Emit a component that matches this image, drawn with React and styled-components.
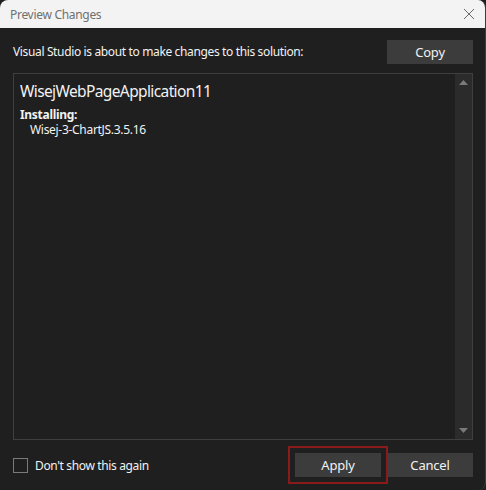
import styled, { createGlobalStyle } from "styled-components";

const Global = createGlobalStyle`
  html, body {
    margin: 0;
    padding: 0;
    background: #1f1f1f;
  }
  body {
    font-family: "Noto Sans", "Open Sans", sans-serif;
  }
`;

const Window = styled.div`
  width: 486px;
  height: 490px;
  box-sizing: border-box;
  display: flex;
  flex-direction: column;
  background: #1f1f1f;
  border-right: 1px solid #3d3d3d;
  border-radius: 8px;
  overflow: hidden;
`;

const TitleBar = styled.div`
  height: 28px;
  flex: none;
  display: flex;
  align-items: center;
  justify-content: space-between;
  background: #f3f3f3;
  padding: 0 10px;
`;

const Title = styled.span`
  font-size: 12px;
  letter-spacing: -0.3px;
  color: #707070;
`;

const Body = styled.div`
  flex: 1;
  display: flex;
  flex-direction: column;
  padding: 12px 12px 6px 13px;
  min-height: 0;
`;

const Header = styled.div`
  display: flex;
  align-items: center;
  justify-content: space-between;
  height: 23px;
`;

const Label = styled.span`
  font-size: 12px;
  letter-spacing: -0.36px;
  color: #f2f2f2;
  margin-top: -1px;
`;

const Button = styled.button`
  width: 86px;
  height: 24px;
  border: none;
  background: #3c3c3c;
  color: #f2f2f2;
  font-family: inherit;
  font-size: 13px;
  letter-spacing: -0.2px;
  padding: 0;
`;

const ListBox = styled.div`
  margin-top: 10px;
  height: 368px;
  box-sizing: border-box;
  border: 1px solid #3f3f3f;
  display: flex;
`;

const ListContent = styled.div`
  flex: 1;
  padding: 6px 6px;
`;

const Project = styled.div`
  font-size: 15.5px;
  letter-spacing: -0.62px;
  color: #f2f2f2;
  line-height: 22px;
`;

const Section = styled.div`
  margin-top: 6px;
  font-size: 12px;
  font-weight: bold;
  letter-spacing: -0.3px;
  color: #f2f2f2;
  line-height: 14px;
`;

const Package = styled.div`
  font-size: 12px;
  letter-spacing: -0.3px;
  color: #f2f2f2;
  padding-left: 10px;
  line-height: 16px;
`;

const ScrollBar = styled.div`
  width: 17px;
  background: #2b2b2b;
  display: flex;
  flex-direction: column;
  justify-content: space-between;
`;

const Arrow = styled.div`
  height: 17px;
  display: flex;
  align-items: center;
  justify-content: center;
`;

const Footer = styled.div`
  margin-top: 6px;
  display: flex;
  align-items: center;
  justify-content: space-between;
  height: 38px;
`;

const CheckRow = styled.label`
  display: flex;
  align-items: center;
  gap: 7px;
  font-size: 12px;
  letter-spacing: -0.36px;
  color: #f2f2f2;
`;

const Box = styled.span`
  width: 13px;
  height: 13px;
  border: 1px solid #7a7a7a;
`;

const Actions = styled.div`
  display: flex;
  align-items: center;
`;

const Focus = styled.div`
  padding: 5px;
  border: 2px solid #8b1b1b;
  margin-right: -1px;
`;

const Tri = ({ down }) => (
  <svg width="9" height="5" viewBox="0 0 9 5">
    <path d={down ? "M0 0H9L4.5 5Z" : "M0 5H9L4.5 0Z"} fill="#7a7a7a" />
  </svg>
);

export default function App() {
  return (
    <>
      <Global />
      <Window>
        <TitleBar>
          <Title>Preview Changes</Title>
          <svg width="12" height="12" viewBox="0 0 12 12">
            <path d="M1 1L11 11M11 1L1 11" stroke="#6a6a6a" strokeWidth="1" />
          </svg>
        </TitleBar>
        <Body>
          <Header>
            <Label>Visual Studio is about to make changes to this solution:</Label>
            <Button>Copy</Button>
          </Header>
          <ListBox>
            <ListContent>
              <Project>WisejWebPageApplication11</Project>
              <Section>Installing:</Section>
              <Package>Wisej-3-ChartJS.3.5.16</Package>
            </ListContent>
            <ScrollBar>
              <Arrow>
                <Tri />
              </Arrow>
              <Arrow>
                <Tri down />
              </Arrow>
            </ScrollBar>
          </ListBox>
          <Footer>
            <CheckRow>
              <Box />
              Don't show this again
            </CheckRow>
            <Actions>
              <Focus>
                <Button>Apply</Button>
              </Focus>
              <Button>Cancel</Button>
            </Actions>
          </Footer>
        </Body>
      </Window>
    </>
  );
}
